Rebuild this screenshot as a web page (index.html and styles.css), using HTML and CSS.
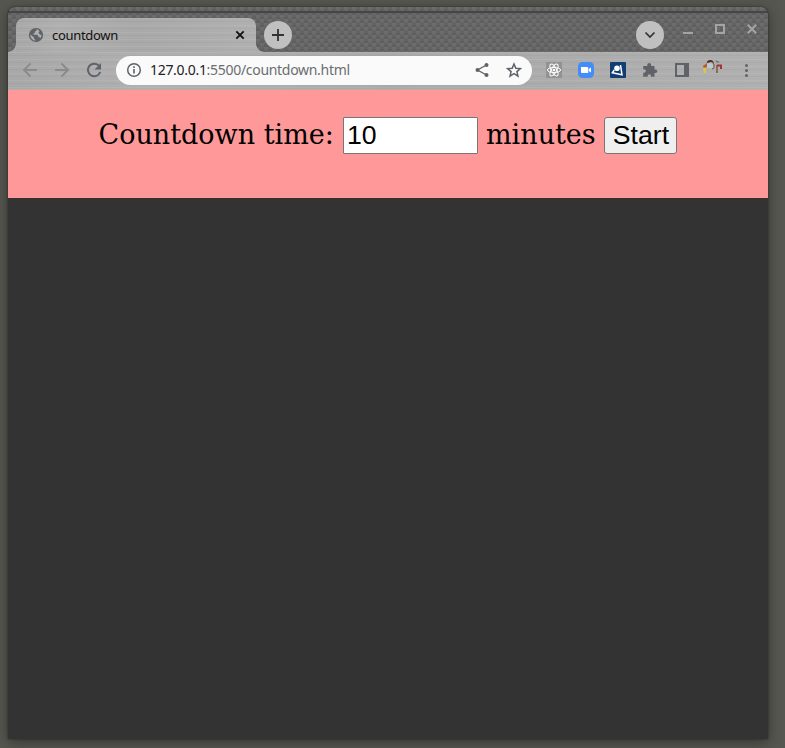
FILE: index.html
```html
<!DOCTYPE html>
<html lang="en">
<head>
<meta charset="utf-8">
<title>countdown</title>
<link rel="stylesheet" href="styles.css">
</head>
<body>
<div class="window">
  <header class="tabstrip">
    <div class="tab">
      <svg class="globe" width="16" height="16" viewBox="0 0 16 16"><circle cx="8" cy="8" r="7.1" fill="#5f6368"/><path d="M8.6 2.3 8.3 4 6.8 4.6v1.3L5.500 6.500v1.200h3.800l1.100 1.200v1.400h1.500l.8.700a5.600 5.600 0 0 0 .8-3l-1.600-.6-1.500-1.600 1.100-1.200-1-1.600zM2.300 7.600 6 10.600v1.200l1.200 1v.9A5.800 5.800 0 0 1 2.300 7.600z" fill="#b0b0b0"/></svg>
      <span class="tab-title">countdown</span>
      <svg class="tab-close" width="10" height="10" viewBox="0 0 10 10"><path d="m1.3 1.3 7.4 7.4m0-7.4L1.3 8.7" stroke="#111" stroke-width="1.8"/></svg>
    </div>
    <div class="round"><svg width="14" height="14" viewBox="0 0 14 14"><path d="M7 1v12M1 7h12" stroke="#333" stroke-width="1.8"/></svg></div>
    <div class="round search"><svg width="12" height="8" viewBox="0 0 12 8"><path d="m1.5 1.5 4.5 4.5 4.5-4.5" fill="none" stroke="#333" stroke-width="1.7"/></svg></div>
    <div class="controls">
      <svg width="10" height="12" viewBox="0 0 10 12"><path d="M0 10h10" stroke="#a4a4a4" stroke-width="2"/></svg>
      <svg width="10" height="12" viewBox="0 0 10 12"><path d="M1 2h8v8H1z" fill="none" stroke="#a4a4a4" stroke-width="2"/></svg>
      <svg width="10" height="12" viewBox="0 0 10 12"><path d="m.8 1.8 8.4 8.4m0-8.4L.8 10.2" stroke="#a4a4a4" stroke-width="2"/></svg>
    </div>
  </header>
  <nav class="toolbar">
    <div class="nav">
      <svg width="16" height="16" viewBox="0 0 16 16"><path d="M15 8H2m6.5-6.5L2 8l6.5 6.5" fill="none" stroke="#8a8a8a" stroke-width="1.8"/></svg>
      <svg width="16" height="16" viewBox="0 0 16 16"><path d="M1 8h13M7.5 1.5 14 8l-6.500 6.500" fill="none" stroke="#8a8a8a" stroke-width="1.8"/></svg>
      <svg width="16" height="16" viewBox="0 0 16 16"><path d="M13.300 4.200A6.300 6.300 0 1 0 14.200 10" fill="none" stroke="#5f6368" stroke-width="2"/><path d="M15 1v6.500H8.500z" fill="#5f6368"/></svg>
    </div>
    <div class="address">
      <svg width="16" height="16" viewBox="0 0 16 16"><circle cx="8" cy="8" r="6.300" fill="none" stroke="#5f6368" stroke-width="1.500"/><path d="M8 7v4.500M8 4.300v1.700" stroke="#5f6368" stroke-width="1.600"/></svg>
      <span class="url"><span class="host">127.0.0.1</span>:5500/countdown.html</span>
      <svg class="share" width="16" height="16" viewBox="0 0 16 16"><path d="M12.500 3 3.500 8l9 5" fill="none" stroke="#5f6368" stroke-width="1.400"/><g fill="#5f6368"><circle cx="12.500" cy="3" r="2"/><circle cx="3.500" cy="8" r="2"/><circle cx="12.500" cy="13" r="2"/></g></svg>
      <svg width="16" height="16" viewBox="0 0 16 16"><path d="m8 2 1.800 4.200 4.600.4-3.500 3 1.100 4.500L8 11.700l-4 2.400 1.100-4.500-3.500-3 4.600-.4z" fill="none" stroke="#5f6368" stroke-width="1.500"/></svg>
    </div>
    <div class="extensions">
      <svg width="16" height="16" viewBox="0 0 16 16"><path d="M0 0h16v16H0z" fill="#929292"/><g fill="none" stroke="#fff" stroke-width="1"><ellipse cx="8" cy="8" rx="6.600" ry="2.600"/><ellipse cx="8" cy="8" rx="6.600" ry="2.600" transform="rotate(60 8 8)"/><ellipse cx="8" cy="8" rx="6.600" ry="2.600" transform="rotate(120 8 8)"/></g><circle cx="8" cy="8" r="1.300" fill="#fff"/></svg>
      <svg width="16" height="16" viewBox="0 0 16 16"><rect width="16" height="16" rx="4.500" fill="#438df8"/><path d="M3 5h6.200a1 1 0 0 1 1 1v5H4a1 1 0 0 1-1-1zM10.800 7.100 13 5.500v5l-2.200-1.600z" fill="#fff"/></svg>
      <svg width="16" height="16" viewBox="0 0 16 16"><rect width="16" height="16" rx="1" fill="#123d72"/><path d="m10.500 3 1.500 9.800L2.300 10.800l2-3" fill="none" stroke="#fff" stroke-width="1.500"/><circle cx="7" cy="6.200" r="2.800" fill="#fff"/></svg>
      <svg width="16" height="16" viewBox="0 0 16 16"><path d="M1.800 4h3.500V2.800a1.900 1.900 0 0 1 3.800 0V4h3.400v3.400h1a1.800 1.800 0 0 1 0 3.600h-1v3.700H9v-.9a1.600 1.600 0 0 0-3.300 0v.9H1.200v-4h.9a1.700 1.700 0 0 0 0-3.400h-.9V4z" fill="#5f6368"/></svg>
      <svg width="16" height="16" viewBox="0 0 16 16"><path d="M1 1h14v14H1zM3 3v10h7V3z" fill="#5f6368" fill-rule="evenodd"/></svg>
      <svg class="avatar" width="22" height="20" viewBox="0 0 22 20"><path d="M5 5.500Q9 2.500 13 6v4q-4 3-8-.5z" fill="#bbb1a9"/><path d="M6 6q4-2 6 1v3H6z" fill="#b9cbd0"/><path d="M6 3.500Q9 1 12 3l1 2-3-1-4 1z" fill="#4b2d24"/><path d="M2 8 6 5v4l-3 2z" fill="#b75b31"/><path d="m2 10 3-.5v5l-2 1z" fill="#d9c84b"/><path d="M11.500 5 13 6v4l-2 1" fill="none" stroke="#6f5548"/><path d="m14 2 5 2-3 1z" fill="#777"/><path d="M15 7h2v8h-2z" fill="#8b6d50"/><path d="M16 6.500h5V11h-2V8.500h-3z" fill="#a3333a"/></svg>
      <svg width="16" height="16" viewBox="0 0 16 16" fill="#5f6368"><circle cx="8.500" cy="3.500" r="1.500"/><circle cx="8.500" cy="8.500" r="1.500"/><circle cx="8.500" cy="13.500" r="1.500"/></svg>
    </div>
  </nav>
  <main class="page">
    <form class="setup">
      <label for="time">Countdown time:</label>
      <input id="time" type="text" value="10">
      <span class="unit">minutes</span>
      <button type="button">Start</button>
    </form>
  </main>
</div>
</body>
</html>
```
FILE: styles.css
```css
* { box-sizing: border-box; }
body {
  margin: 0;
  height: 748px;
  padding: 7px 17px 9px 8px;
  overflow: hidden;
  background: #555750;
}
svg { display: block; flex: none; }
.window {
  display: flex;
  flex-direction: column;
  height: 732px;
  border-radius: 7px 7px 0 0;
  box-shadow: 0 3px 14px rgba(0, 0, 0, .4), 0 0 2px rgba(0, 0, 0, .5);
  background: #333;
}
.tabstrip {
  display: flex;
  align-items: flex-start;
  height: 45px;
  padding: 11px 11px 0 8px;
  border-radius: 7px 7px 0 0;
  background:
    linear-gradient(transparent 4px, #464646 4px, #464646 6px, transparent 6px),
    repeating-linear-gradient(rgba(255, 255, 255, .02) 0 2px, rgba(0, 0, 0, .02) 2px 4px),
    repeating-conic-gradient(#606060 0 25%, #6a6a6a 0 50%) 0 0 / 8px 8px;
}
.tab, .toolbar {
  background:
    repeating-linear-gradient(rgba(255, 255, 255, .07) 0 1px, transparent 1px 3px, rgba(0, 0, 0, .03) 3px 4px, transparent 4px 7px),
    linear-gradient(90deg, #a8a8a8, #b0b0b0 18%, #a9a9a9 50%, #b0b0b0);
}
.tab {
  position: relative;
  display: flex;
  align-items: center;
  width: 240px;
  height: 34px;
  padding: 0 11px 0 12px;
  border-radius: 8px 8px 0 0;
}
/* flared feet of the active tab */
.tab::before, .tab::after {
  content: "";
  position: absolute;
  bottom: 0;
  width: 8px;
  height: 8px;
}
.tab::before { right: 100%; background: radial-gradient(circle at 0 0, transparent 7.5px, #aaa 8px); }
.tab::after { left: 100%; background: radial-gradient(circle at 100% 0, transparent 7.5px, #adadad 8px); }
.tab-title {
  margin-left: 8px;
  font: 13px "Noto Sans", sans-serif;
  letter-spacing: -.3px;
  color: #111;
}
.tab-close { margin-left: auto; }
.round {
  display: flex;
  align-items: center;
  justify-content: center;
  width: 28px;
  height: 28px;
  margin: 3px 0 0 8px;
  border-radius: 50%;
  background: #c0c0c0;
}
.search { margin-left: auto; }
.controls { display: flex; gap: 22px; margin: 5px 0 0 19px; }
.toolbar {
  display: flex;
  align-items: center;
  height: 38px;
  padding: 0 14px 1px;
  border-bottom: 1px solid #b5b0b0;
}
.nav { display: flex; gap: 16px; }
.address {
  display: flex;
  align-items: center;
  width: 416px;
  height: 29px;
  margin: 1px 0 0 14px;
  padding: 0 10px 1px;
  border-radius: 15px;
  background: #fafafa;
}
.url {
  margin: -2px 0 0 8px;
  font: 14px "Noto Sans", sans-serif;
  letter-spacing: -.3px;
  color: #6b6d70;
  white-space: nowrap;
}
.host { color: #222; }
.share { margin: 0 16px 0 auto; }
.extensions { display: flex; align-items: center; gap: 16px; margin-left: 14px; }
.avatar { margin: -5px -1px 0 -5px; }
.page { flex: 1; background: #333; }
.setup {
  display: flex;
  align-items: flex-start;
  height: 108px;
  padding: 27px 0 0 90.5px;
  background: #f99;
  font: 27px/36px "DejaVu Serif", serif;
  color: #000;
}
.setup label { width: 244.5px; white-space: nowrap; }
.setup input, .setup button {
  height: 37px;
  margin: 0;
  border: 1px solid #767676;
  font: 26.67px "Liberation Sans", Arial, sans-serif;
  color: #000;
}
.setup input { width: 135px; padding: 1px 3px; border-radius: 1px; background: #fff; }
.unit { width: 118px; margin-left: 8px; }
.setup button { width: 73px; padding: 0 0 0 1px; border-radius: 3px; background: #efefef; }
```
